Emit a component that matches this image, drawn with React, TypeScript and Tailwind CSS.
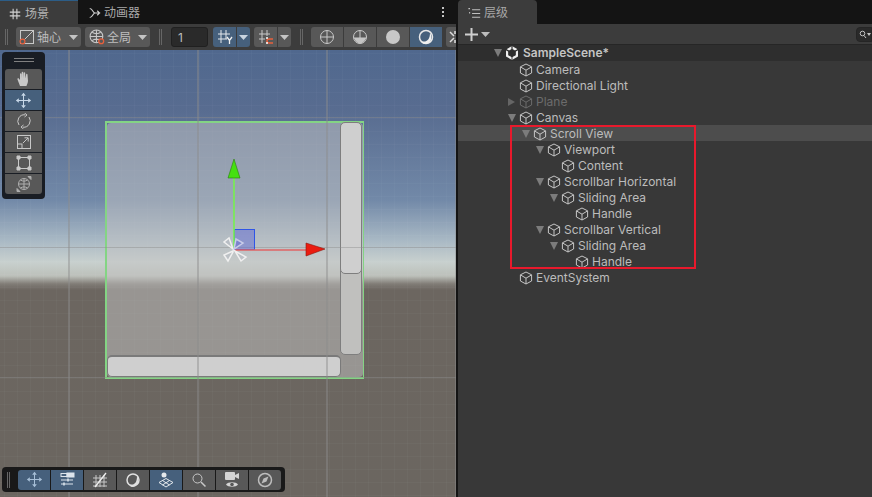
import type { ReactNode } from "react";

const font = { fontFamily: "Inter, 'Noto Sans CJK SC', sans-serif" };

const treeRows = [
  { name: "Camera", depth: 1 },
  { name: "Directional Light", depth: 1 },
  { name: "Plane", depth: 1, arrow: "right", dim: true },
  { name: "Canvas", depth: 1, arrow: "down" },
  { name: "Scroll View", depth: 2, arrow: "down", hover: true },
  { name: "Viewport", depth: 3, arrow: "down" },
  { name: "Content", depth: 4 },
  { name: "Scrollbar Horizontal", depth: 3, arrow: "down" },
  { name: "Sliding Area", depth: 4, arrow: "down" },
  { name: "Handle", depth: 5 },
  { name: "Scrollbar Vertical", depth: 3, arrow: "down" },
  { name: "Sliding Area", depth: 4, arrow: "down" },
  { name: "Handle", depth: 5 },
  { name: "EventSystem", depth: 1 },
];

function Ico({ size = 16, children, stroke = "#c8c8c8" }: { size?: number; children: ReactNode; stroke?: string }) {
  return (
    <svg width={size} height={size} viewBox="0 0 16 16" fill="none" stroke={stroke} strokeWidth="1" className="shrink-0">
      {children}
    </svg>
  );
}

function Caret({ color = "#c4c4c4" }: { color?: string }) {
  return (
    <svg width="9" height="5" viewBox="0 0 9 5" className="shrink-0">
      <path d="M0 0H9L4.5 5Z" fill={color} />
    </svg>
  );
}

function Handle({ className = "" }: { className?: string }) {
  return (
    <div className={`flex shrink-0 gap-[1px] ${className}`}>
      <div className="h-4 w-[1px] bg-[#666666]" />
      <div className="h-4 w-[1px] bg-[#666666]" />
    </div>
  );
}

function Cube({ dim }: { dim?: boolean }) {
  return (
    <svg width="14" height="14" viewBox="0 0 14 14" fill="none" stroke={dim ? "#6c6c6c" : "#c6c6c6"} strokeWidth="1" strokeLinejoin="round" className="shrink-0">
      <path d="M7 1 12.6 3.8V10L7 13 1.4 10V3.8Z" />
      <path d="M1.6 4 7 7.2 12.4 4M7 7.2V13" />
    </svg>
  );
}

function TreeArrow({ dir }: { dir?: string }) {
  if (dir === "down") {
    return (
      <svg width="14" height="8" viewBox="0 0 14 8" className="shrink-0">
        <path d="M3 0H11L7 8Z" fill="#7c7c7c" />
      </svg>
    );
  }
  if (dir === "right") {
    return (
      <svg width="14" height="10" viewBox="0 0 14 10" className="shrink-0">
        <path d="M3 1 10 5 3 9Z" fill="#656565" />
      </svg>
    );
  }
  return <span className="w-[14px] shrink-0" />;
}

function MoveIcon({ color = "#c8d8e8" }: { color?: string }) {
  return (
    <Ico stroke={color} size={17}>
      <path d="M8 3v10M3 8h10" />
      <path d="M8 .8 5.8 3.6h4.4ZM8 15.2l-2.2-2.8h4.4ZM.8 8l2.8-2.2v4.4ZM15.2 8l-2.8-2.2v4.4Z" fill={color} stroke="none" />
    </Ico>
  );
}

function TopBtn({ children, active, className = "w-8" }: { children: ReactNode; active?: boolean; className?: string }) {
  return (
    <div className={`flex h-5 shrink-0 items-center justify-center ${active ? "bg-[#46607c]" : "bg-[#585858]"} ${className}`}>
      {children}
    </div>
  );
}

function ToolBtn({ children, active }: { children: ReactNode; active?: boolean }) {
  return (
    <div className={`flex h-[20px] w-[37px] items-center justify-center ${active ? "bg-[#46607c]" : "bg-[#585858]"}`}>
      {children}
    </div>
  );
}

function OverlayBtn({ children, active }: { children: ReactNode; active?: boolean }) {
  return (
    <div className={`flex h-5 w-8 items-center justify-center ${active ? "bg-[#46607c]" : "bg-[#585858]"}`}>
      {children}
    </div>
  );
}

function Gizmos() {
  return (
    <svg width="456" height="447" viewBox="0 50 456 447" fill="none" className="absolute left-0 top-0">
      <rect x="234.5" y="229.5" width="20" height="20" fill="#5a64d8" fillOpacity="0.45" stroke="#2f55e6" />
      <path d="M234 248V176" stroke="#76f04e" strokeWidth="1.6" />
      <path d="M234 159 228 178H240Z" fill="#45e010" stroke="#2a7a10" strokeWidth="0.6" />
      <path d="M235 250H308" stroke="#e06464" strokeWidth="1.6" />
      <path d="M325 249 306 243V256Z" fill="#ea1c10" stroke="#8a1a10" strokeWidth="0.6" />
      <g stroke="#f0f0f0" strokeWidth="1.5" fill="#b8bcc4" fillOpacity="0.5">
        <path d="M233 249 224 242 229 238Z" />
        <path d="M234 249 236 239 243 243Z" fill="#6a70d0" stroke="#c8cce8" />
        <path d="M233 251 224 255 228 261 233 252Z" />
        <path d="M235 251 241 261 246 257Z" />
      </g>
    </svg>
  );
}

function CanvasRect() {
  return (
    <div className="absolute left-[105px] top-[71px] h-[258px] w-[259px] border-2 border-r border-[#84d484]">
      <div className="flex h-full rounded-[4px] bg-[#c4c4c4]/50">
        <div className="flex w-[233px] shrink-0 flex-col justify-end">
          <div className="mr-[-1px] h-[22px] rounded-[5px] border border-t-2 border-[#7a7a7a] bg-[#cfcfcf]" />
        </div>
        <div className="mt-[-1px] h-[233px] w-[22px] shrink-0 rounded-[5px] border border-[#7e7e7e] bg-[#c0c0be]">
          <div className="mx-[-1px] mt-[-1px] h-[152px] rounded-[5px] border border-[#7e7e7e] bg-[#cfcfcf]" />
        </div>
      </div>
    </div>
  );
}

export default function App() {
  return (
    <div className="flex h-[497px] w-[872px] overflow-hidden bg-[#191919] text-[12px] text-[#bcbcbc]" style={font}>
      <div className="flex w-[456px] shrink-0 flex-col">
        <div className="flex h-6 shrink-0 items-stretch bg-[#141414]">
          <div className="flex w-[78px] items-center gap-[4px] border-t border-[#2c5d87] bg-[#3c3c3c] pl-[9px] pt-[2px] text-[#b4b4b4]">
            <Ico size={12}>
              <path d="M1 5.500h14M1 10.500h14M5.500 1v14M10.500 1v14" stroke="#d0d0d0" strokeWidth="1.500" />
            </Ico>
            场景
          </div>
          <div className="flex items-center gap-[3px] pl-[11px] pt-[2px] text-[#a8a8a8]">
            <Ico size={12}>
              <path d="M1 2c4 0 4 6 7 6h7M1 14c4 0 4-6 7-6M11 5l3 3-3 3" stroke="#d0d0d0" strokeWidth="1.500" />
            </Ico>
            动画器
          </div>
          <div className="ml-auto flex w-[16px] flex-col items-center justify-center gap-[2px] pr-[10px]">
            <span className="size-[2px] shrink-0 bg-[#c4c4c4]" />
            <span className="size-[2px] shrink-0 bg-[#c4c4c4]" />
            <span className="size-[2px] shrink-0 bg-[#c4c4c4]" />
          </div>
        </div>

        <div className="flex h-[26px] shrink-0 items-center overflow-hidden bg-[#3c3c3c] pl-[5px]">
          <Handle className="mr-[8px]" />
          <TopBtn className="w-[65px] justify-start gap-[2px] rounded-[3px] pl-[3px]">
            <Ico size={16}>
              <rect x="1.500" y="1.500" width="13" height="13" />
              <path d="M3 13 14 2" />
              <circle cx="3.500" cy="12.500" r="2.400" stroke="#e8603c" fill="#585858" strokeWidth="1.200" />
            </Ico>
            <span className="pt-[2px] text-[#bdbdbd]">轴心</span>
            <span className="ml-[6px]">
              <Caret />
            </span>
          </TopBtn>
          <TopBtn className="ml-1 w-[65px] justify-start gap-[1px] rounded-[3px] pl-[4px]">
            <Ico size={17}>
              <circle cx="7" cy="7" r="6" />
              <path d="M1 7h12M7 1v12M3 3c2 2 6 2 8 0M3 11c2-2 6-2 8 0" />
              <circle cx="11.500" cy="11.500" r="2.300" stroke="#e8603c" fill="#585858" strokeWidth="1.200" />
            </Ico>
            <span className="pt-[2px] text-[#bdbdbd]">全局</span>
            <span className="ml-[6px]">
              <Caret />
            </span>
          </TopBtn>
          <Handle className="ml-[9px] mr-[9px]" />
          <div className="flex h-5 w-[37px] shrink-0 items-center rounded-[3px] border border-[#202020] bg-[#2a2a2a] pl-[6px] pt-[1px] text-[#bdbdbd]">1</div>
          <TopBtn active className="ml-[5px] w-[23px] rounded-l-[3px]">
            <Ico>
              <path d="M1 5h12M1 10h9M4 1v13M9 1v9" stroke="#e4e8ec" />
              <path d="M10 8l2.500 3.500L15 8M12.500 11.500V15" stroke="#f0f0f0" strokeWidth="1.300" />
            </Ico>
          </TopBtn>
          <TopBtn active className="ml-[1px] w-[13px] rounded-r-[3px]">
            <Caret color="#c8d4e0" />
          </TopBtn>
          <TopBtn className="ml-[4px] w-[23px] rounded-l-[3px]">
            <Ico>
              <path d="M1 5h11M1 10h6M4 1v13M9 1v6" />
              <path d="M15 10h-4a2 2 0 0 0 0 4h4" stroke="#e8603c" strokeWidth="1.500" />
              <path d="M8 9h2M8 14h2" stroke="#ffffff" strokeWidth="1.300" />
            </Ico>
          </TopBtn>
          <TopBtn className="ml-[1px] w-[13px] rounded-r-[3px]">
            <Caret />
          </TopBtn>
          <Handle className="ml-[9px] mr-[8px]" />
          <div className="flex gap-[1px]">
            <TopBtn className="w-[32px] rounded-l-[3px]">
              <Ico>
                <circle cx="8" cy="8" r="6.500" />
                <path d="M1.500 8h13M8 1.500v13" />
              </Ico>
            </TopBtn>
            <TopBtn>
              <Ico>
                <circle cx="8" cy="8" r="6.500" />
                <path d="M2 9h12M8 1.500V14" />
                <path d="M2 9c1 3.500 4 5.500 6 5.500S13 12.500 14 9Z" fill="#c4c4c4" stroke="none" />
              </Ico>
            </TopBtn>
            <TopBtn>
              <Ico>
                <circle cx="8" cy="8" r="7" fill="#c8c8c8" stroke="none" />
              </Ico>
            </TopBtn>
            <TopBtn active>
              <Ico>
                <circle cx="8" cy="8" r="6.500" stroke="#e8e8e8" strokeWidth="1.500" />
                <path d="M3 12c5 2 9-1 9-8 3 4 1 11-5 11-2 0-3-1-4-3Z" fill="#f0f0f0" stroke="none" />
              </Ico>
            </TopBtn>
          </div>
          <TopBtn className="ml-1 w-[14px] justify-start rounded-l-[3px] pl-[1px]">
            <Ico stroke="#dddddd">
              <path d="M3 3l4 4M3 13l4-4M8 2v3M8 11v3" strokeWidth="1.500" />
            </Ico>
          </TopBtn>
        </div>

        <div className="relative min-h-0 flex-1 overflow-hidden bg-[linear-gradient(180deg,#50688e_0,#586c90_60px,#7289a8_150px,#a8b8c4_190px,#c8d0ce_212px,#bcc0ba_226px,#807c76_234px,#6c6660_240px,#6b6660_100%)]">
          <div className="absolute inset-0 bg-[linear-gradient(90deg,rgba(255,255,255,.025)_1px,transparent_1px),linear-gradient(180deg,rgba(255,255,255,.025)_1px,transparent_1px)] bg-[length:13px_13px] bg-[position:4px_3px]" />

          <CanvasRect />
          <div className="pointer-events-none absolute inset-0 bg-[linear-gradient(90deg,rgba(140,140,140,.45)_2px,transparent_2px),linear-gradient(180deg,rgba(140,140,140,.45)_1px,transparent_1px)] bg-[length:129px_130px] bg-[position:68px_67px]" />
          <Gizmos />

          <div className="absolute left-[2px] top-[2px] flex h-[147px] w-[43px] flex-col items-center rounded-[4px] bg-[#191d24]">
            <div className="mb-[2px] mt-[6px] flex h-[9px] w-[20px] flex-col gap-[2px]">
              <span className="h-[1px] bg-[#808080]" />
              <span className="h-[1px] bg-[#808080]" />
            </div>
            <div className="flex flex-col gap-[1px] overflow-hidden rounded-[3px]">
              <ToolBtn>
                <svg width="16" height="16" viewBox="0 0 16 16" fill="#c8c8c8">
                  <path d="M4 15 1.500 8.500c-.4-1 .9-1.700 1.500-.8L4 9V3c0-1 1.400-1 1.500 0l.2 4V1.500c0-1 1.500-1 1.600 0l.2 5.500.2-5c.1-1 1.500-1 1.500 0l.1 5.500.8-4c.2-1 1.500-.8 1.400.2L12 10c-.2 2-1 3.500-1.500 5Z" />
                </svg>
              </ToolBtn>
              <ToolBtn active>
                <MoveIcon />
              </ToolBtn>
              <ToolBtn>
                <Ico>
                  <path d="M3 12A6.500 6.500 0 0 1 9 1.800M13 4A6.500 6.500 0 0 1 7 14.200" />
                  <path d="M8.500 0 11 2 8.500 4M7.500 12 5 14l2.500 2" />
                </Ico>
              </ToolBtn>
              <ToolBtn>
                <Ico>
                  <rect x="1.500" y="1.500" width="13" height="13" />
                  <rect x="1.500" y="10" width="4.500" height="4.500" />
                  <path d="M7 9l5-5M8.500 3.800H12.200V7.500" />
                </Ico>
              </ToolBtn>
              <ToolBtn>
                <Ico>
                  <path d="M4 2.500h8M4 13.500h8M2.500 4v8M13.500 4v8" />
                  <path d="M1 1h3v3H1zM12 1h3v3h-3zM1 12h3v3H1zM12 12h3v3h-3z" fill="#c8c8c8" />
                </Ico>
              </ToolBtn>
              <ToolBtn>
                <Ico stroke="#aeaeae">
                  <circle cx="8" cy="8" r="5.500" />
                  <path d="M2.500 8h11M8 2.500v11M4.500 4c2 1.500 5 1.500 7 0M4.500 12c2-1.500 5-1.500 7 0" />
                  <path d="M12 .5h3v3ZM1 15.500v-3l3 3Z" fill="#aeaeae" />
                </Ico>
              </ToolBtn>
            </div>
          </div>

          <div className="absolute bottom-[5px] left-[2px] flex h-[25px] w-[283px] items-center rounded-[4px] bg-[#191919] pl-[5px]">
            <Handle className="mr-[8px]" />
            <div className="flex gap-[1px] overflow-hidden rounded-[3px]">
              <OverlayBtn active>
                <MoveIcon color="#a8c0d8" />
              </OverlayBtn>
              <OverlayBtn active>
                <Ico stroke="#dce4ec">
                  <rect x="8" y="1" width="7" height="4" fill="#dce4ec" />
                  <rect x="2" y="1.500" width="6" height="3" />
                  <path d="M2 8h12M2 12h12" />
                  <path d="M9 6.500v3M5 10.500v3" strokeWidth="1.500" />
                </Ico>
              </OverlayBtn>
              <OverlayBtn>
                <Ico>
                  <path d="M1 6h14M1 10h14M1 14h14M4 3v12M8 3v12M12 3v12" />
                  <path d="M3 15 14 1" stroke="#eeeeee" strokeWidth="1.300" />
                </Ico>
              </OverlayBtn>
              <OverlayBtn>
                <Ico>
                  <circle cx="8" cy="8" r="6" stroke="#e0e0e0" strokeWidth="1.500" />
                  <path d="M4 12c5 2 8-1 8-8 3 4 1 11-5 11-1 0-2-1-3-3Z" fill="#e0e0e0" stroke="none" />
                </Ico>
              </OverlayBtn>
              <OverlayBtn active>
                <Ico stroke="#e4e8ec">
                  <circle cx="6" cy="3" r="2.500" fill="#e4e8ec" stroke="none" />
                  <path d="M8 6.500 15 10.500 8 15 1 10.500ZM4.500 8.500l7 4.500M11.500 8.500l-7 4.500" />
                </Ico>
              </OverlayBtn>
              <OverlayBtn>
                <Ico stroke="#c8c8c8">
                  <circle cx="6.500" cy="6.500" r="4.500" />
                  <path d="M10 10l4.500 4.500" strokeWidth="1.500" />
                </Ico>
              </OverlayBtn>
              <OverlayBtn>
                <svg width="18" height="16" viewBox="0 0 18 16" fill="#d4d4d4">
                  <rect x="2" y="0" width="10" height="8" rx="1" />
                  <path d="M12 3l4-2v6l-4-2Z" />
                  <path d="M3 12.500c2-3 10-3 12 0-2 3-10 3-12 0Z" />
                  <circle cx="9" cy="12.500" r="1.800" fill="#585858" />
                </svg>
              </OverlayBtn>
              <OverlayBtn>
                <Ico stroke="#bcbcbc">
                  <circle cx="8" cy="8" r="6.500" strokeWidth="1.500" />
                  <path d="M11.500 4.500 9.500 9.500 4.500 11.500 6.500 6.500Z" fill="#bcbcbc" stroke="none" />
                </Ico>
              </OverlayBtn>
            </div>
          </div>
        </div>
      </div>

      <div className="w-[2px] shrink-0 bg-[#141414]" />

      <div className="flex min-w-0 flex-1 flex-col">
        <div className="flex h-6 shrink-0 bg-[#141414]">
          <div className="flex w-[79px] items-center gap-[3px] rounded-t-[4px] bg-[#3c3c3c] pl-[10px] pt-[2px] text-[#a8a8a8]">
            <Ico size={13}>
              <path d="M5 3.500h10M5 8h10M5 12.500h10" stroke="#c0c0c0" strokeWidth="1.300" />
              <path d="M.5 2h2M2 6v2" stroke="#c0c0c0" strokeWidth="1.300" />
            </Ico>
            层级
          </div>
        </div>
        <div className="flex h-5 shrink-0 items-center bg-[#3c3c3c] pl-[7px]">
          <svg width="13" height="13" viewBox="0 0 13 13" fill="#cfcfcf" className="shrink-0">
            <path d="M5.500 0h2v5.500H13v2H7.500V13h-2V7.500H0v-2h5.500Z" />
          </svg>
          <span className="ml-[3px]">
            <Caret color="#bdbdbd" />
          </span>
          <div className="ml-auto flex h-[15px] w-4 items-center rounded-l-[4px] border border-[#252525] bg-[#2a2a2a] pl-[2px]">
            <svg width="12" height="9" viewBox="0 0 12 9" fill="none" stroke="#c4c4c4">
              <circle cx="3.500" cy="3.500" r="2.300" />
              <path d="M5 5.500 7 8" />
              <path d="M8 3h4L10 6Z" fill="#c4c4c4" stroke="none" />
            </svg>
          </div>
        </div>
        <div className="relative min-h-0 flex-1 bg-[#383838]">
          <div className="flex h-[17px] items-center border-t border-[#262626] bg-[#2e2e2e] pl-[33px]">
            <TreeArrow dir="down" />
            <svg width="14" height="14" viewBox="0 0 14 14" fill="#eeeeee" className="shrink-0">
              <path d="M7 0 13 3.500V10.500L7 14 1 10.500V3.500Z" />
              <path d="M7 3.500 3.800 5.300V8.800L7 10.600 10.200 8.800V5.300Z M7 0V3.500M1 3.500 3.800 5.300M13 3.500 10.200 5.300" fill="#2e2e2e" stroke="#2e2e2e" strokeWidth="1.200" />
              <path d="M7 7V14M7 7 1 3.500M7 7 13 3.500" stroke="#2e2e2e" strokeWidth="0.900" />
            </svg>
            <span className="ml-1 font-semibold text-[#c4c4c4]">SampleScene*</span>
          </div>
          {treeRows.map((row, i) => (
            <div
              key={i}
              className={`flex h-4 items-center pt-[2px] ${row.hover ? "bg-[#4d4d4d]" : ""} ${row.dim ? "text-[#6c6c6c]" : ""}`}
              style={{ paddingLeft: 33 + row.depth * 14 }}
            >
              <TreeArrow dir={row.arrow} />
              <Cube dim={row.dim} />
              <span className="ml-[3px] whitespace-nowrap">{row.name}</span>
            </div>
          ))}
          <div className="absolute left-[52px] top-[81px] h-[144px] w-[186px] border-2 border-[#e8192c]" />
        </div>
      </div>
    </div>
  );
}
